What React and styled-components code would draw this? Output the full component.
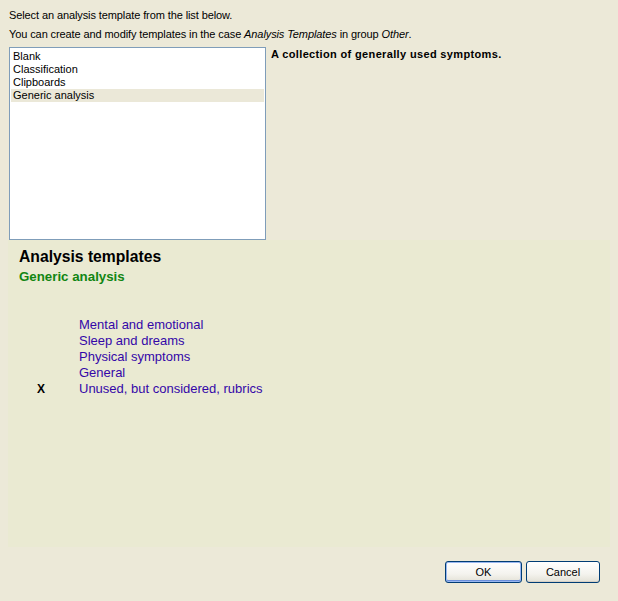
import React from "react";
import styled, { createGlobalStyle } from "styled-components";

const Global = createGlobalStyle`
  html, body { margin: 0; padding: 0; background: #ece9d8; }
  body { font-family: "Liberation Sans", Arial, sans-serif; font-size: 11px; color: #000; }
  #root { width: 618px; height: 601px; }
`;

const Page = styled.div`
  width: 618px;
  height: 601px;
  box-sizing: border-box;
  padding: 9px 8px 0 8px;
  display: flex;
  flex-direction: column;
`;

const Intro = styled.div`
  padding-left: 1px;
  line-height: 13px;
  letter-spacing: -0.1px;
  margin-bottom: ${(p) => p.$gap}px;
  white-space: nowrap;
  em { font-style: italic; }
`;

const TopRow = styled.div`
  display: flex;
  align-items: flex-start;
`;

const ListBox = styled.div`
  margin-left: 1px;
  width: 253px;
  height: 187px;
  background: #fff;
  border: 1px solid #7f9db9;
  padding: 2px 1px;
  box-sizing: content-box;
`;

const ListItem = styled.div`
  height: 13px;
  line-height: 13px;
  padding-left: 2px;
  background: ${(p) => (p.$selected ? "#ebe8d8" : "transparent")};
`;

const Description = styled.div`
  margin-left: 5px;
  padding-top: 1px;
  font-weight: bold;
  letter-spacing: 0.35px;
  line-height: 13px;
`;

const Panel = styled.div`
  width: 602px;
  height: 307px;
  background: #eaead2;
  box-sizing: border-box;
  padding: 8px 0 0 11px;
`;

const Title = styled.div`
  font-size: 15.7px;
  font-weight: bold;
  line-height: 18px;
`;

const Subtitle = styled.div`
  margin-top: 3px;
  font-size: 13.3px;
  font-weight: bold;
  color: #128612;
  line-height: 16px;
`;

const Items = styled.div`
  margin-top: 32px;
  display: grid;
  grid-template-columns: 60px auto;
  font-size: 13px;
  line-height: 16px;
`;

const Mark = styled.div`
  padding-left: 18px;
  font-weight: bold;
  font-size: 12px;
`;

const ItemLabel = styled.div`
  color: #3407a8;
`;

const Footer = styled.div`
  display: flex;
  justify-content: flex-end;
  gap: 4px;
  padding: 14px 10px 0 0;
`;

const Button = styled.button`
  width: ${(p) => p.$w}px;
  height: 22px;
  box-sizing: border-box;
  font-family: "Liberation Sans", Arial, sans-serif;
  font-size: 11px;
  color: #000;
  border: 1px solid #003c74;
  border-radius: 3px;
  background: linear-gradient(#ffffff, #f4f3ee 60%, #e3e1d6);
  box-shadow: ${(p) =>
    p.$default ? "inset 0 0 0 1px #99b7f0, inset 0 -1px 0 1px #6b8fdc" : "inset 0 -1px 0 #d6d0c5"};
  padding: 0;
`;

const listItems = ["Blank", "Classification", "Clipboards", "Generic analysis"];
const groups = [
  { mark: "", label: "Mental and emotional" },
  { mark: "", label: "Sleep and dreams" },
  { mark: "", label: "Physical symptoms" },
  { mark: "", label: "General" },
  { mark: "X", label: "Unused, but considered, rubrics" },
];

export default function App() {
  return (
    <>
      <Global />
      <Page>
        <Intro $gap={6}>Select an analysis template from the list below.</Intro>
        <Intro $gap={6}>
          You can create and modify templates in the case <em>Analysis Templates</em> in group <em>Other</em>.
        </Intro>
        <TopRow>
          <ListBox>
            {listItems.map((t) => (
              <ListItem key={t} $selected={t === "Generic analysis"}>{t}</ListItem>
            ))}
          </ListBox>
          <Description>A collection of generally used symptoms.</Description>
        </TopRow>
        <Panel>
          <Title>Analysis templates</Title>
          <Subtitle>Generic analysis</Subtitle>
          <Items>
            {groups.map((g) => (
              <React.Fragment key={g.label}>
                <Mark>{g.mark}</Mark>
                <ItemLabel>{g.label}</ItemLabel>
              </React.Fragment>
            ))}
          </Items>
        </Panel>
        <Footer>
          <Button $w={77} $default>OK</Button>
          <Button $w={74}>Cancel</Button>
        </Footer>
      </Page>
    </>
  );
}
